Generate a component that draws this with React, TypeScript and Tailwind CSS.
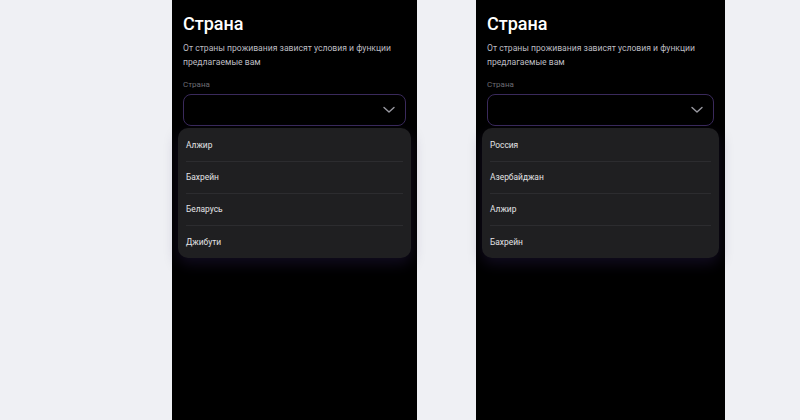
import React from 'react';

const phones = [
  { w: 'w-[245px]', items: ['Алжир', 'Бахрейн', 'Беларусь', 'Джибути'] },
  { w: 'w-[249px]', items: ['Россия', 'Азербайджан', 'Алжир', 'Бахрейн'] },
];

function Chevron() {
  return (
    <svg width="12" height="8" viewBox="0 0 12 8" fill="none">
      <path d="M1 1.5l5 4.5 5-4.5" stroke="#9a9aa2" strokeWidth="1.4" strokeLinecap="round" strokeLinejoin="round" />
    </svg>
  );
}

function Phone({ w, items }: { w: string; items: string[] }) {
  return (
    <div className={`${w} h-[420px] bg-black px-[11px] pt-[12px]`}>
      <h1 className="text-[18px] leading-[24px] font-medium text-white">Страна</h1>
      <p className="mt-[5px] text-[8.6px] leading-[14px] text-[#bdbdc2]">
        От страны проживания зависят условия и функции предлагаемые вам
      </p>
      <div className="mt-[10px] text-[8px] leading-[12px] text-[#6d6d73]">Страна</div>
      <div className="mt-[3px] h-[32px] rounded-[8px] border border-[#3a2a5c] flex items-center justify-end pr-[10px]">
        <Chevron />
      </div>
      <div className="-mx-[5px] mt-[2px] rounded-[10px] bg-[#1f1f21] px-[8px] pt-[2px] shadow-[0_6px_14px_rgba(50,35,90,0.35)]">
        {items.map((it, i) => (
          <div
            key={it}
            className={`h-[32px] flex items-center text-[8.4px] text-[#e4e4e6] ${i < items.length - 1 ? 'border-b border-[#2c2c2f]' : ''}`}
          >
            {it}
          </div>
        ))}
      </div>
    </div>
  );
}

export default function App() {
  return (
    <div className="w-[800px] h-[420px] bg-[#eff0f4] flex gap-[59px] pl-[172px] overflow-hidden" style={{ fontFamily: 'Roboto, "Noto Sans", sans-serif' }}>
      {phones.map((p, i) => (
        <Phone key={i} w={p.w} items={p.items} />
      ))}
    </div>
  );
}
